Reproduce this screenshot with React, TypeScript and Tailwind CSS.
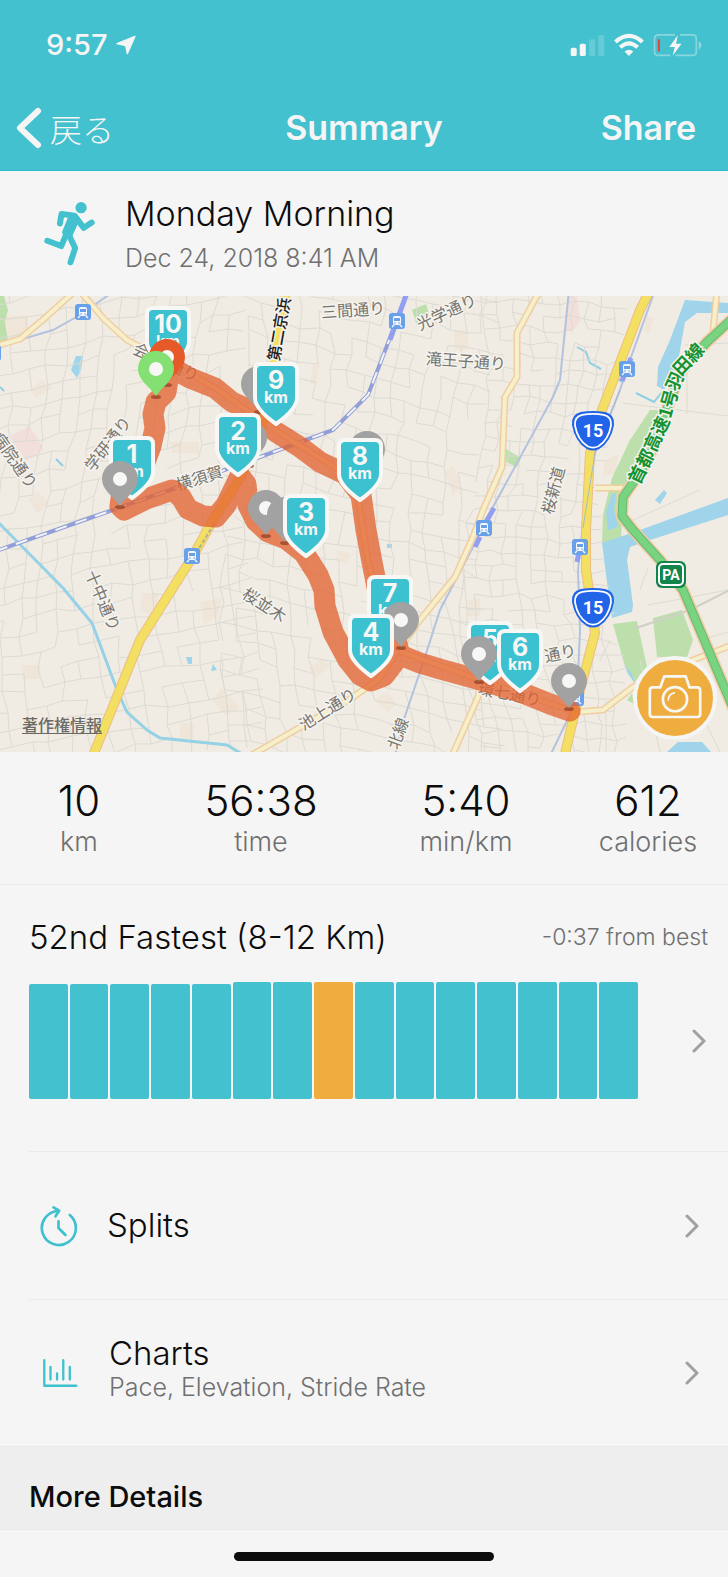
import React from 'react';

const JP = '"Noto Sans CJK JP", sans-serif';

const stats = [
    { value: '10', label: 'km' },
    { value: '56:38', label: 'time' },
    { value: '5:40', label: 'min/km' },
    { value: '612', label: 'calories' },
];

const bars = [98, 98, 98, 98, 98, 100, 100, 100, 100, 100, 100, 100, 100, 100, 100];
const currentBar = 7;

// small residential streets: a jittered mesh with gaps, tilted per district
function buildStreets() {
    let seed = 7;
    const rand = () => {
        seed = (seed * 16807) % 2147483647;
        return seed / 2147483647;
    };
    const districts = [
        { x: -20, y: 250, w: 270, h: 540, step: 18, tilt: -0.35 },
        { x: 235, y: 230, w: 260, h: 560, step: 17, tilt: 0.45 },
        { x: 475, y: 270, w: 145, h: 490, step: 14, tilt: 0.12 },
    ];
    let d = '';
    districts.forEach(({ x, y, w, h, step, tilt }) => {
        const cols = Math.floor(w / step);
        const rows = Math.floor(h / step);
        const points: number[][][] = [];
        for (let r = 0; r <= rows; r++) {
            points.push([]);
            for (let c = 0; c <= cols; c++) {
                const bend = Math.sin(r / 5 + c / 7) * 14;
                points[r].push([
                    Math.round(x + c * step + bend + (rand() - 0.5) * 6),
                    Math.round(y + r * step + c * step * tilt * 0.5 + (rand() - 0.5) * 6),
                ]);
            }
        }
        for (let r = 0; r < rows; r++) {
            for (let c = 0; c < cols; c++) {
                const [px, py] = points[r][c];
                if (rand() > 0.22) d += `M${px} ${py}L${points[r][c + 1][0]} ${points[r][c + 1][1]}`;
                if (rand() > 0.22) d += `M${px} ${py}L${points[r + 1][c][0]} ${points[r + 1][c][1]}`;
            }
        }
    });
    return d;
}

const streets = buildStreets();

const minorRoads = [
    'M540 290L517 333L517 377L505 397L502 467L483 510L473 537L455 577L420 620L400 648L378 680L350 699L290 733L250 756',
    'M481 680L478 697L452 756',
    'M76 290L45 318L20 339L0 345',
    'M79 290L104 319L127 340L165 360L215 388L275 430L355 480L368 560L385 632L402 652L480 680L575 712L603 710L633 687L693 660L732 645',
    'M595 488L625 488',
    'M717 290L713 332',
];

const majorRoads = [
    'M286 290L277 340L270 380L262 425L240 478L213 520L193 556L140 640L92 758',
    'M650 290L640 310L602 410L590 453L586 530L586 570L595 633L580 690L564 758',
];

const expressway = 'M734 317L707 342L682 370L670 400L655 445L640 473L623 497L622 516L633 530L660 560L683 590L700 630L734 710';

const rails = [
    'M-4 347L53 330L80 315L110 294',
    'M569 290L560 380L553 397L493 507L473 547L440 610L423 663L403 722L395 756',
    'M655 290L630 360L620 390L595 453L583 523L578 570L580 630L577 700L550 756',
];

const stations = [[83, 312], [397, 321], [627, 369], [484, 528], [580, 547], [192, 556], [-7, 353], [576, 698]];

const labels = [
    { text: '三間通り', x: 353, y: 309, rotate: -4 },
    { text: '光学通り', x: 446, y: 311, rotate: -25 },
    { text: '滝王子通り', x: 466, y: 360, rotate: 4 },
    { text: '学研通り', x: 107, y: 443, rotate: -52 },
    { text: '病院通り', x: 16, y: 460, rotate: 55 },
    { text: '横須賀', x: 199, y: 477, rotate: -17 },
    { text: '十中通り', x: 104, y: 600, rotate: 67 },
    { text: '桜並木', x: 265, y: 604, rotate: 33 },
    { text: '池上通り', x: 327, y: 708, rotate: -32 },
    { text: '北線', x: 397, y: 733, rotate: -70 },
    { text: '桜新道', x: 552, y: 490, rotate: -75 },
    { text: '環七通り', x: 510, y: 693, rotate: 11 },
    { text: '通り', x: 560, y: 652, rotate: -12 },
    { text: '会', x: 142, y: 350, rotate: 25 },
    { text: '通り', x: 184, y: 369, rotate: 25 },
];

const route =
    'M168 380L166 392L156 402L153 414L155 428L151 446L142 470L122 492L120 506L124 510L146 499L172 490L181 497L188 509L203 516L216 517L226 505L240 476L246 484L248 505L256 521L268 532L286 539L304 553L318 575L324 590L325 606L333 632L348 660L360 675L371 681L384 676L400 655L420 663L440 669L480 680L520 692L550 704L570 711';
const routeBack = 'M400 655L392 625L378 592L372 562L366 530L361 495L345 474L320 462L300 447L276 432L250 410L232 402L215 388L190 378L172 368';

type MarkerProps = { x: number; y: number; km: number };

function KmMarker({ x, y, km }: MarkerProps) {
    return (
        <g transform={`translate(${x} ${y})`}>
            <path
                d="M-15 2H15Q21 2 21 8V36Q21 47 0 62Q-21 47 -21 36V8Q-21 2 -15 2Z"
                fill="#3cc1d0"
                stroke="#f7f7f5"
                strokeWidth="4"
                strokeLinejoin="round"
            />
            <text x="0" y="27" textAnchor="middle" className="fill-[#f7f7f5] text-[25px] font-bold">{km}</text>
            <text x="0" y="41" textAnchor="middle" className="fill-[#f7f7f5] text-[16px] font-bold">km</text>
        </g>
    );
}

type PinProps = { x: number; y: number; color?: string; dot?: boolean };

function Pin({ x, y, color = '#a2a2a2', dot = true }: PinProps) {
    return (
        <g transform={`translate(${x} ${y})`}>
            <ellipse cx="0" cy="28" rx="5" ry="2" fill="#8f3d22" opacity="0.7" />
            <path d="M0 -18C10 -18 18 -10 18 0C18 11 7 17 0 27C-7 17 -18 11 -18 0C-18 -10 -10 -18 0 -18Z" fill={color} />
            {dot && <circle r="7" fill="#f7f7f5" />}
        </g>
    );
}

function Station({ x, y }: { x: number; y: number }) {
    return (
        <g transform={`translate(${x} ${y})`}>
            <rect x="-8" y="-8" width="16" height="16" rx="3" fill="#69a0ea" />
            <rect x="-4" y="-5" width="8" height="9" rx="2" fill="#f5f7fa" />
            <rect x="-3" y="-3" width="6" height="3" fill="#69a0ea" />
            <path d="M-3 4L-5 6M3 4L5 6" stroke="#f5f7fa" strokeWidth="1.5" />
            <circle cx="-2" cy="2" r="0.8" fill="#69a0ea" />
            <circle cx="2" cy="2" r="0.8" fill="#69a0ea" />
        </g>
    );
}

function RouteShield({ x, y }: { x: number; y: number }) {
    const shape = 'M-12 -18Q0 -20 12 -18Q21 -16 20 -6Q17 10 6 17Q0 20 -6 17Q-17 10 -20 -6Q-21 -16 -12 -18Z';
    return (
        <g transform={`translate(${x} ${y})`}>
            <path d={shape} fill="#2264e8" stroke="#2264e8" strokeWidth="2" />
            <path d={shape} transform="scale(0.9)" fill="#2264e8" stroke="#fff" strokeWidth="2" />
            <text x="0" y="6" textAnchor="middle" className="fill-white font-['Roboto'] text-[18px] font-bold">15</text>
        </g>
    );
}

function RouteMap() {
    return (
        <svg viewBox="0 296 728 456" className="block h-auto w-full" role="img" aria-label="Route map">
            <defs>
                <path id="shuto" d="M632 482L648 450L663 417L672 384L680 366L712 332" />
            </defs>
            <rect y="296" width="728" height="456" fill="#f0ece4" />

            <g fill="#efe5d8">
                <path d="M5 316h22v22h-18zM30 390l12 -10l10 8l-16 10zM171 442h28v11h-27zM141 593h17v25l-17 -8zM200 602l22 -4l-4 18l-14 8zM22 665h18v14h-18zM28 500l10 -8l10 10l-10 12zM212 700l10 -12l18 20l-14 8zM180 723h14v16h-14z" />
                <path d="M313 364l7 -2l-4 22h-6zM454 330h14v20h-14zM445 472l8 -6l8 20l-8 10zM338 550l12 4l-2 10l-12 -4zM308 668l14 -10l8 8l-14 12zM468 600l12 -2v18h-12zM375 700l12 -8l10 12l-10 8zM605 460l14 -6l-4 20l-12 2zM646 316l8 2l-4 14h-6z" />
            </g>
            <path d="M9 436L30 426L44 450L26 461Z M568 296H577L580 322L572 332L566 330Z" fill="#f2dfdc" />

            <g fill="#bcdfac">
                <path d="M0 296H4L8 310L5 322L8 340L0 348Z" />
                <path d="M412 310L426 304L430 318L417 326Z" />
                <path d="M650 410H662L623 497L621 540L602 545L603 515L612 478L630 440Z" />
                <path d="M506 449L521 458L517 467L504 461Z" />
                <path d="M613 624L637 621L647 667L634 683L624 663Z" />
                <path d="M653 618L682 610L693 640L687 657H657Z" />
                <path d="M627 700L632 693L634 704Z" />
            </g>

            <g fill="#9fd4ea">
                <path d="M685 300L728 303V313L697 313L685 322L677 367L664 390L657 386L658 367L670 340Z" />
                <path d="M602 543L640 530L728 498V515L650 540L630 547L627 560L633 605L632 612L612 618L608 590Z" />
                <path d="M612 494L616 493L614 510L618 527L608 530L606 512Z" />
                <path d="M667 752L678 742H702L711 752Z" />
                <path d="M76 356L83 356L81 370L77 378L71 370Z" />
                <path d="M655 500L664 490L667 493L660 504Z M186 657h6v7h-4z M213 664l4 6l-6 1z M387 544h5v4h-5z M624 664L632 674L634 682L628 674Z" />
            </g>
            <g fill="none" stroke="#8fcfe4" strokeWidth="2">
                <path d="M577 347L586 352L590 363L601 369M618 379L622 382M636 393L654 402L662 392" />
                <path d="M0 387L4 391M56 459L63 466" />
            </g>

            <path d={streets} fill="none" stroke="#dcdbd3" />
            <path d="M-2 522L63 588L92 623L117 690L127 712L147 730L160 738L227 745L242 754" fill="none" stroke="#96d2e6" strokeWidth="3" />
            <g fill="none" stroke="#dddbd3">
                <path d="M622 403L728 416M685 345L728 343M687 370V414M640 590L648 568M648 605L728 590M700 640L728 632M640 660L660 752M690 690L720 752M610 640L600 660M606 700V752M633 520L700 490" />
                <path d="M636 628L690 610L728 591" stroke="#cfcfca" strokeWidth="2" />
            </g>

            <g fill="none" stroke="#b3c2de" strokeWidth="2">
                {rails.map((d) => <path key={d} d={d} />)}
            </g>
            <path d="M-4 551L87 519L170 490L260 457L333 430L368 395L388 343L408 290" fill="none" stroke="#929fd8" strokeWidth="4" />
            <path d="M-4 551L87 519L170 490L260 457L333 430L368 395L390 338" fill="none" stroke="#f3f3f6" strokeWidth="2" strokeDasharray="12 9" />
            <path d="M408 290L390 340M494 508L486 522M480 537L475 547M631 358L622 381M579 552L577 562" stroke="#929ff0" strokeWidth="5" fill="none" />

            <g fill="none" strokeLinejoin="round">
                {minorRoads.map((d) => <path key={d} d={d} stroke="#f1cda2" strokeWidth="7" />)}
                {minorRoads.map((d) => <path key={d} d={d} stroke="#f5efca" strokeWidth="4" />)}
                {majorRoads.map((d) => <path key={d} d={d} stroke="#edbd83" strokeWidth="10" />)}
                {majorRoads.map((d) => <path key={d} d={d} stroke="#f3df62" strokeWidth="8" />)}
                <path d={expressway} stroke="#f1cda2" strokeWidth="12" />
                <path d={expressway} stroke="#6ab876" strokeWidth="9" />
                <path d={expressway} stroke="#78d481" strokeWidth="7" />
                <path d="M620 390L595 453L583 528" stroke="#a9bbc8" strokeWidth="1" />
                <path d="M214 524L192 560" stroke="#b3b096" strokeWidth="2" strokeDasharray="4 2" />
            </g>

            {stations.map(([x, y]) => <Station key={`${x}-${y}`} x={x} y={y} />)}

            <g
                fontFamily={JP}
                fontSize="16"
                fill="#77756f"
                stroke="#f5f3ee"
                strokeWidth="3"
                strokeLinejoin="round"
                paintOrder="stroke"
                textAnchor="middle"
                dominantBaseline="central"
            >
                {labels.map(({ text, x, y, rotate }) => (
                    <text key={`${text}-${x}`} transform={`translate(${x} ${y}) rotate(${rotate})`}>{text}</text>
                ))}
                <text transform="translate(278 329) rotate(-80)" fill="#222" fontWeight="500">第二京浜</text>
                <text fill="#159332" fontWeight="700" fontSize="18" textAnchor="start">
                    <textPath href="#shuto">首都高速1号羽田線</textPath>
                </text>
            </g>

            <RouteShield x={593} y={431} />
            <RouteShield x={593} y={608} />
            <g transform="translate(671 574)">
                <rect x="-15" y="-13" width="30" height="27" rx="6" fill="#12854c" />
                <rect x="-12" y="-10" width="24" height="21" rx="4" fill="#12854c" stroke="#fff" strokeWidth="2" />
                <text x="0" y="6" textAnchor="middle" className="fill-white font-['Roboto'] text-[14px] font-bold">PA</text>
            </g>

            <g fill="none" stroke="#e4622f" strokeWidth="21" strokeLinejoin="round" strokeLinecap="round" opacity="0.76">
                <path d={route} />
                <path d={routeBack} />
            </g>

            <KmMarker x={168} y={306} km={10} />
            <Pin x={167} y={357} color="#e65a2a" />
            <Pin x={156} y={369} color="#84e072" />
            <Pin x={259} y={384} dot={false} />
            <KmMarker x={276} y={362} km={9} />
            <Pin x={249} y={438} dot={false} />
            <KmMarker x={238} y={413} km={2} />
            <KmMarker x={132} y={436} km={1} />
            <Pin x={120} y={479} />
            <Pin x={367} y={449} dot={false} />
            <KmMarker x={360} y={438} km={8} />
            <Pin x={266} y={508} />
            <Pin x={285} y={515} dot={false} />
            <KmMarker x={306} y={494} km={3} />
            <KmMarker x={390} y={575} km={7} />
            <Pin x={401} y={620} />
            <KmMarker x={371} y={614} km={4} />
            <KmMarker x={490} y={621} km={5} />
            <Pin x={479} y={654} />
            <KmMarker x={520} y={629} km={6} />
            <Pin x={569} y={681} />
        </svg>
    );
}

function StatusIcons() {
    return (
        <svg viewBox="618 100 392 70" className="h-6 w-[132px]" aria-hidden="true">
            <g fill="#f5f5f5">
                <rect x="620" y="143" width="18" height="25" rx="5" />
                <rect x="647" y="131" width="18" height="37" rx="5" />
                <rect x="675" y="118" width="18" height="50" rx="5" opacity="0.2" />
                <rect x="702" y="105" width="18" height="63" rx="5" opacity="0.2" />
                <path d="M793 168L780 154Q793 144 806 154Z" />
            </g>
            <g fill="none" stroke="#f5f5f5" strokeWidth="12">
                <path d="M753 126Q793 90 833 126" />
                <path d="M767 142Q793 118 819 142" />
            </g>
            <path d="M930 105H881Q869 105 869 117V154Q869 166 881 166H916M945 105H981Q993 105 993 117V154Q993 166 981 166H931" fill="none" stroke="#f5f5f5" strokeOpacity="0.4" strokeWidth="5" />
            <path d="M1000 124Q1008 127 1008 136Q1008 145 1000 148Z" fill="#f5f5f5" fillOpacity="0.45" />
            <rect x="879" y="118" width="6" height="36" fill="#e8413c" />
            <path d="M938 106L913 141H929L923 167L949 131H933Z" fill="#f5f5f5" />
        </svg>
    );
}

function RunnerIcon() {
    return (
        <svg viewBox="130 608 154 196" className="mt-2 h-[65px] w-[51px]" fill="none" stroke="#43c1cf" strokeWidth="18" strokeLinecap="round" strokeLinejoin="round" aria-hidden="true">
            <circle cx="242" cy="628" r="17" fill="#43c1cf" stroke="none" />
            <path d="M178 676L183 647L222 652L250 689L274 673" />
            <path d="M214 653L229 662L208 708L194 702Z" fill="#43c1cf" />
            <path d="M200 702L182 744L140 728" />
            <path d="M203 706L224 750L210 793" />
        </svg>
    );
}

function SplitsIcon() {
    return (
        <svg viewBox="118 194 116 126" className="h-[42px] w-[39px]" fill="none" stroke="#3fc0ce" strokeWidth="8" strokeLinecap="round" strokeLinejoin="round" aria-hidden="true">
            <path d="M210 224A51 51 0 1 1 176 212" />
            <path d="M161 201L178 211L167 228" />
            <path d="M176 243V263L197 284" />
        </svg>
    );
}

function ChartsIcon() {
    return (
        <svg viewBox="126 653 110 90" className="h-[30px] w-9" fill="none" stroke="#3fc0ce" strokeWidth="7" strokeLinecap="round" strokeLinejoin="round" aria-hidden="true">
            <path d="M133 659V737H231" />
            <path d="M152 679V718M172 699V718M191 659V718M211 679V718" />
        </svg>
    );
}

function Chevron() {
    return (
        <svg viewBox="0 0 14 24" className="h-6 w-[14px] shrink-0" fill="none" stroke="#a0a0a0" strokeWidth="3" strokeLinecap="round" strokeLinejoin="round" aria-hidden="true">
            <path d="M2 2L12 12L2 22" />
        </svg>
    );
}

export default function App() {
    return (
        <div className="min-h-screen w-full bg-[#f5f5f5] font-['Inter',sans-serif] text-[#0c0c0c]">
            <header className="border-b border-[#2fb8c8] bg-[#43c1cf] text-[#f5f5f5]">
                <div className="flex items-center justify-between pt-6 pr-[26px] pl-[46px]">
                    <div className="flex items-center gap-2">
                        <span className="text-[29px] leading-[42px] font-medium">9:57</span>
                        <svg viewBox="347 106 60 58" className="size-5" fill="#f5f5f5" stroke="#f5f5f5" strokeWidth="4" strokeLinejoin="round" aria-hidden="true">
                            <path d="M404 109L350 131L376 137L381 161Z" />
                        </svg>
                    </div>
                    <StatusIcons />
                </div>
                <div className="grid grid-cols-3 items-center px-4 pt-[38px] pb-[18px]">
                    <button type="button" className="flex items-center gap-2 justify-self-start">
                        <svg viewBox="0 0 26 42" className="h-[42px] w-[26px]" fill="none" stroke="#f5f5f5" strokeWidth="6" strokeLinecap="round" strokeLinejoin="round" aria-hidden="true">
                            <path d="M22 4L4 21L22 38" />
                        </svg>
                        <span className="font-['Noto_Sans_CJK_JP',sans-serif] text-[32px] leading-[46px] font-light">戻る</span>
                    </button>
                    <h1 className="justify-self-center text-[34px] leading-[48px] font-semibold">Summary</h1>
                    <button type="button" className="justify-self-end pr-4 text-[34px] leading-[48px] font-semibold">Share</button>
                </div>
            </header>

            <section className="flex items-start gap-[30px] px-11 pt-[22px] pb-[14px]">
                <RunnerIcon />
                <div>
                    <h2 className="text-[34px] leading-[41px] font-light">Monday Morning</h2>
                    <p className="text-[25px] leading-[48px] font-light text-[#707070]">Dec 24, 2018 8:41 AM</p>
                </div>
            </section>

            <section className="relative">
                <RouteMap />
                <a href="#copyright" className="absolute bottom-4 left-[22px] font-['Noto_Sans_CJK_JP',sans-serif] text-[16px] leading-6 font-medium text-[#6b6a66] underline underline-offset-2">著作権情報</a>
                <button type="button" aria-label="Add photo" className="absolute right-[11px] bottom-3 flex size-[84px] items-center justify-center rounded-full border-4 border-[#f5f5f5] bg-[#efad3f]">
                    <svg viewBox="508 460 160 134" className="mb-1 h-[45px] w-[54px]" fill="none" stroke="#f7f7f5" strokeWidth="8" strokeLinejoin="round" strokeLinecap="round">
                        <path d="M522 500H544L556 467H620L631 500H654Q663 500 663 509V580Q663 588 654 588H522Q513 588 513 580V509Q513 500 522 500Z" />
                        <circle cx="588" cy="535" r="36" />
                        <path d="M568 537Q569 519 586 516" strokeWidth="5" />
                    </svg>
                </button>
            </section>

            <section className="grid grid-cols-[158fr_206fr_204fr_160fr] border-b border-[#e9e9e9] pt-[25px] pb-[25px] text-center">
                {stats.map((stat) => (
                    <div key={stat.label}>
                        <p className="text-[42px] leading-[48px] font-light">{stat.value}</p>
                        <p className="text-[27px] leading-[34px] font-light text-[#707070]">{stat.label}</p>
                    </div>
                ))}
            </section>

            <section className="pl-[29px]">
                <div className="flex items-center justify-between pt-7 pr-5">
                    <h2 className="text-[33px] leading-[48px] font-light">52nd Fastest (8-12 Km)</h2>
                    <p className="text-[23px] leading-[48px] font-light text-[#707070]">-0:37 from best</p>
                </div>
                <button type="button" aria-label="Compare with other activities" className="flex w-full items-center justify-between gap-[54px] border-b border-[#e9e9e9] pt-[21px] pr-[22px] pb-[52px]">
                    <span className="flex h-[117px] flex-1 items-end gap-[2px]">
                        {bars.map((height, i) => (
                            <span
                                key={i}
                                className={`flex-1 rounded-[2px] ${i === currentBar ? 'bg-[#efad3f]' : 'bg-[#43c1cf]'}`}
                                style={{ height: `${height}%` }}
                            />
                        ))}
                    </span>
                    <Chevron />
                </button>
                <button type="button" className="flex w-full items-center border-b border-[#e9e9e9] py-[50px] pr-[29px] pl-[10px] text-left">
                    <SplitsIcon />
                    <span className="flex-1 pl-[29px] text-[33px] leading-[47px] font-light">Splits</span>
                    <Chevron />
                </button>
                <button type="button" className="flex w-full items-center py-[33px] pr-[29px] pl-[13px] text-left">
                    <ChartsIcon />
                    <span className="flex-1 pb-3 pl-[31px]">
                        <span className="block text-[33px] leading-10 font-light">Charts</span>
                        <span className="block text-[25px] leading-7 font-light text-[#707070]">Pace, Elevation, Stride Rate</span>
                    </span>
                    <Chevron />
                </button>
            </section>

            <section className="border-y border-[#e9e9e9] bg-[#eeeeee] px-[29px] pt-[30px] pb-3">
                <h2 className="text-[29px] leading-10 font-medium">More Details</h2>
            </section>

            <div className="flex justify-center pt-[22px] pb-4">
                <div className="h-[9px] w-[260px] rounded-full bg-[#0c0c0c]" />
            </div>
        </div>
    );
}
